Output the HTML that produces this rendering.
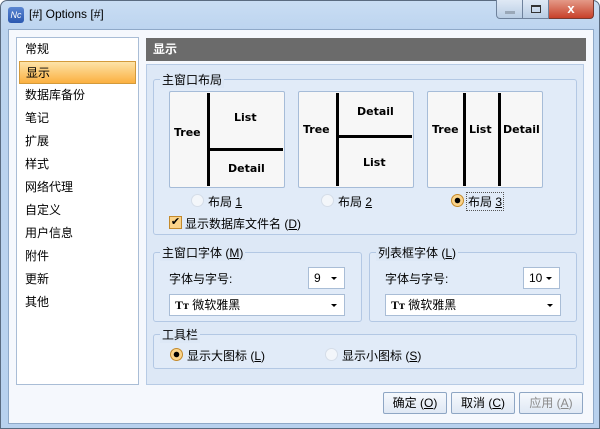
<!DOCTYPE html><html><head><meta charset="utf-8"><style>
*{box-sizing:border-box;margin:0;padding:0}
body{width:600px;height:429px;overflow:hidden;font-family:"Liberation Sans","Noto Sans CJK SC",sans-serif;font-size:12px;color:#000;background:#fff}
.win{position:absolute;left:0;top:0;width:600px;height:429px;background:linear-gradient(#c9ddf3,#bcd4ef 30px,#b8d1ee);border:1px solid #5a6b80;border-radius:7px 7px 0 0}
.a{position:absolute}
.client{left:7px;top:28px;width:586px;height:395px;background:#f5f8fd;border:1px solid #8fa9c8}
.list{left:15px;top:36px;width:123px;height:348px;background:#fff;border:1px solid #a9bdd6}
.list div{height:23px;line-height:23px;padding-left:8px;font-size:12px}
.sel{background:linear-gradient(#fde3a8,#fbb041);border:1px solid #d39a3b;margin:0 2px;padding-left:6px!important}
.hdr{left:145px;top:37px;width:440px;height:23px;background:#6b6b6b;color:#fff;font-weight:bold;line-height:23px;padding-left:7px}
.panel{left:145px;top:63px;width:438px;height:321px;background:#dde8f6;border:1px solid #b7cbe5}
.grp{position:absolute;border:1px solid #b3c8e4;border-radius:3px;background:#e1ebf8}
.lg{position:absolute;top:-9px;left:6px;background:#dde8f6;padding:0 2px;font-size:12px}
.th{position:absolute;width:116px;height:97px;background:#f7f7f7;border:1px solid #a6bcd8;border-radius:2px;font-weight:bold;font-family:"DejaVu Sans",sans-serif;font-size:11px}
.th span{position:absolute}
.v{position:absolute;width:3px;background:#000;top:1px;bottom:1px}
.h{position:absolute;height:3px;background:#000}
.rad{position:absolute;width:13px;height:13px;border-radius:50%;border:1px solid #d5dde8;background:#f3f6fa}
.rad.on{border-color:#c48a2c;background:radial-gradient(#000 2.5px,#fbd48a 3px)}
.u{text-decoration:underline}
.combo{position:absolute;height:22px;background:#fff;border:1px solid #a9bdd6;line-height:20px;padding-left:5px}
.combo:after{content:"";position:absolute;right:7px;top:9px;border:3px solid transparent;border-top:3px solid #000}
.btn{position:absolute;top:391px;width:64px;height:22px;border:1px solid #8ea6c4;border-radius:2px;background:linear-gradient(#f6f9fd,#dfe8f4);text-align:center;line-height:20px}
</style></head><body>
<div class="win">
<div class="a" style="left:7px;top:6px;width:16px;height:16px;border-radius:3px;background:linear-gradient(#5a86d1,#2a58b0);color:#fff;font-size:9px;font-style:italic;line-height:16px;text-align:center">Nc</div>
<div class="a" style="left:28px;top:6px;font-size:12px">[#] Options [#]</div>
<div class="a" style="left:495px;top:-1px;width:27px;height:19px;border:1px solid #6f829c;border-top:0;border-radius:0 0 0 4px;background:linear-gradient(#dfe9f5,#b9cde4)"><div class="a" style="left:8px;top:11px;width:10px;height:3px;background:#9aa8b8"></div></div>
<div class="a" style="left:522px;top:-1px;width:26px;height:19px;border:1px solid #6f829c;border-top:0;border-left:0;background:linear-gradient(#dfe9f5,#b9cde4)"><div class="a" style="left:8px;top:5px;width:10px;height:8px;border:1px solid #333;border-top-width:2px"></div></div>
<div class="a" style="left:548px;top:-1px;width:45px;height:19px;border:1px solid #7a3a30;border-top:0;border-left:0;border-radius:0 0 4px 0;background:linear-gradient(#e49a88,#c8412a);color:#fff;font-weight:bold;text-align:center;line-height:17px;font-size:13px">x</div>
<div class="a client"></div>
<div class="a list">
<div>常规</div><div class="sel">显示</div><div>数据库备份</div><div>笔记</div><div>扩展</div><div>样式</div><div>网络代理</div><div>自定义</div><div>用户信息</div><div>附件</div><div>更新</div><div>其他</div>
</div>
<div class="a hdr">显示</div>
<div class="a panel"></div>
<div class="grp" style="left:152px;top:78px;width:424px;height:156px"><div class="lg">主窗口布局</div></div>
<div class="th" style="left:168px;top:90px"><span style="left:4px;top:34px">Tree</span><div class="v" style="left:37px"></div><div class="h" style="left:37px;right:1px;top:56px"></div><span style="left:64px;top:19px">List</span><span style="left:58px;top:70px">Detail</span></div>
<div class="th" style="left:297px;top:90px"><span style="left:4px;top:31px">Tree</span><div class="v" style="left:37px"></div><div class="h" style="left:37px;right:1px;top:43px"></div><span style="left:58px;top:13px">Detail</span><span style="left:64px;top:64px">List</span></div>
<div class="th" style="left:426px;top:90px"><span style="left:4px;top:31px">Tree</span><div class="v" style="left:35px"></div><div class="v" style="left:70px"></div><span style="left:41px;top:31px">List</span><span style="left:75px;top:31px">Detail</span></div>
<div class="rad" style="left:190px;top:193px"></div><div class="a" style="left:207px;top:192px">布局 <span class="u">1</span></div>
<div class="rad" style="left:320px;top:193px"></div><div class="a" style="left:337px;top:192px">布局 <span class="u">2</span></div>
<div class="rad on" style="left:450px;top:193px"></div><div class="a" style="left:465px;top:191px;border:1px dotted #555;padding:0 1px">布局 <span class="u">3</span></div>
<div class="a" style="left:168px;top:215px;width:13px;height:13px;border:1px solid #c48a2c;background:#fbd48a;font-size:11px;line-height:11px;text-align:center">✔</div>
<div class="a" style="left:184px;top:214px">显示数据库文件名 (<span class="u">D</span>)</div>
<div class="grp" style="left:152px;top:251px;width:209px;height:70px"><div class="lg">主窗口字体 (<span class="u">M</span>)</div></div>
<div class="a" style="left:168px;top:269px">字体与字号:</div>
<div class="combo" style="left:307px;top:266px;width:37px">9</div>
<div class="combo" style="left:168px;top:293px;width:176px"><b style="font-family:'Liberation Serif',serif">Tт</b> 微软雅黑</div>
<div class="grp" style="left:368px;top:251px;width:208px;height:70px"><div class="lg">列表框字体 (<span class="u">L</span>)</div></div>
<div class="a" style="left:384px;top:269px">字体与字号:</div>
<div class="combo" style="left:522px;top:266px;width:37px">10</div>
<div class="combo" style="left:384px;top:293px;width:176px"><b style="font-family:'Liberation Serif',serif">Tт</b> 微软雅黑</div>
<div class="grp" style="left:152px;top:333px;width:424px;height:35px"><div class="lg">工具栏</div></div>
<div class="rad on" style="left:169px;top:347px"></div><div class="a" style="left:186px;top:346px">显示大图标 (<span class="u">L</span>)</div>
<div class="rad" style="left:324px;top:347px"></div><div class="a" style="left:341px;top:346px">显示小图标 (<span class="u">S</span>)</div>
<div class="btn" style="left:382px">确定 (<span class="u">O</span>)</div>
<div class="btn" style="left:450px">取消 (<span class="u">C</span>)</div>
<div class="btn" style="left:518px;color:#8a8a8a">应用 (<span class="u">A</span>)</div>
</div>
</body></html>
